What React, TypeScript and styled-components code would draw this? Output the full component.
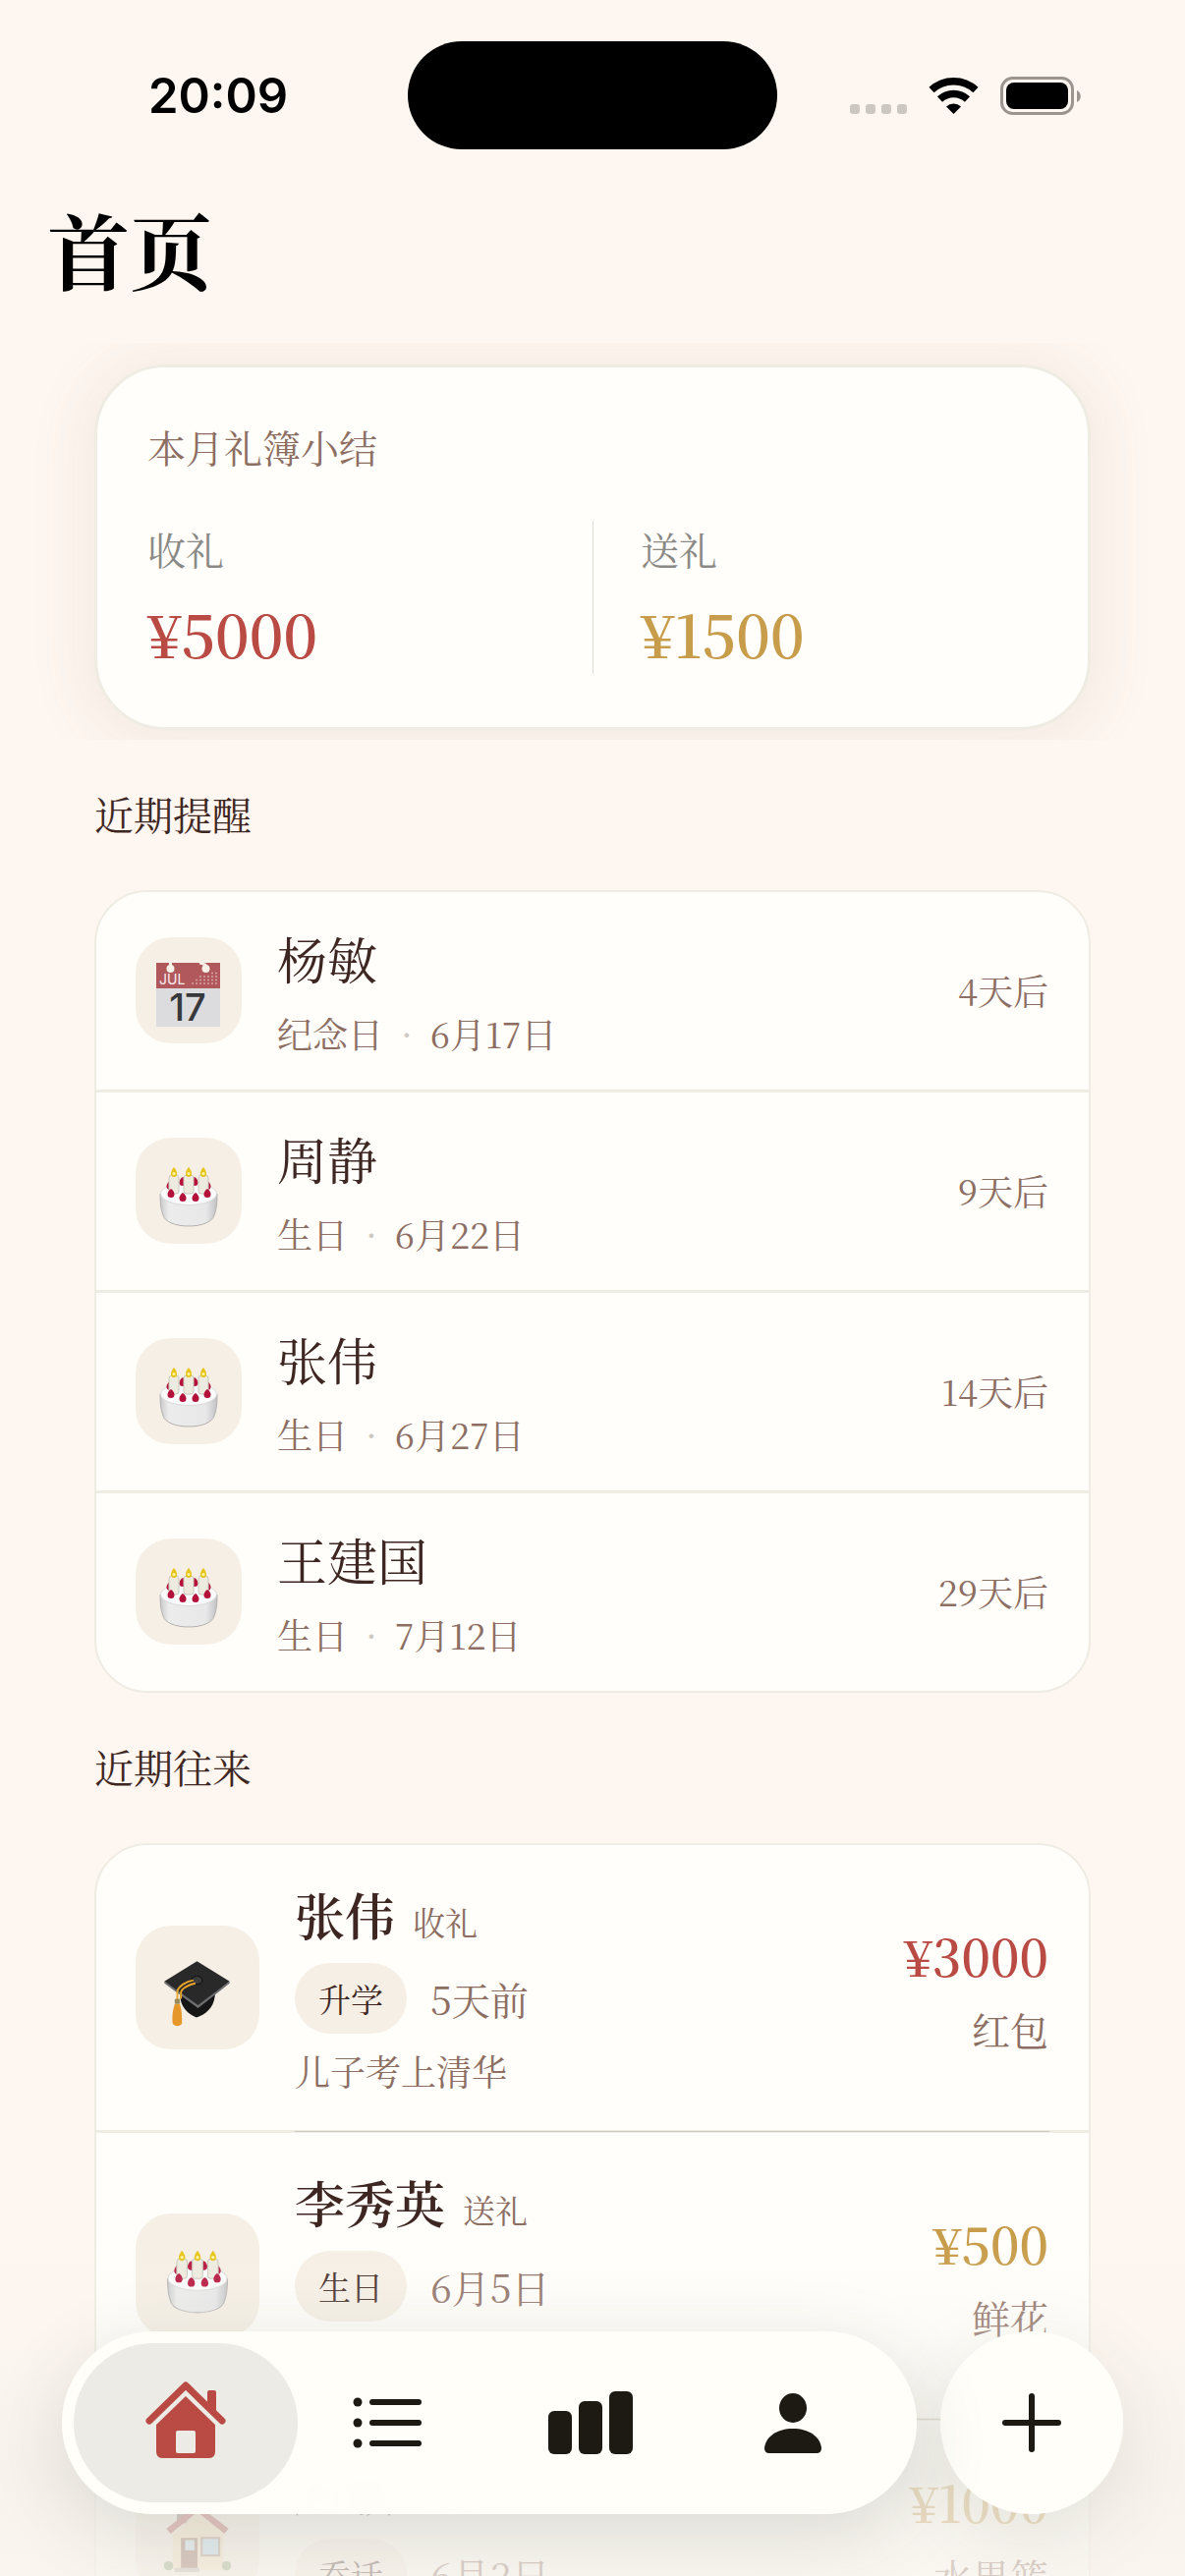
import React from "react";
import styled, { createGlobalStyle } from "styled-components";

const color = {
  paper: "#fef6f0",
  card: "#fffefa",
  line: "#efece3",
  tile: "#f5efe5",
  ink: "#3e2723",
  brown: "#8d6e63",
  grey: "#8a8985",
  red: "#b94b44",
  gold: "#c79c4a",
};

const serif = `"Noto Serif CJK SC", "Liberation Serif", "Noto Sans CJK SC", serif`;

const GlobalStyle = createGlobalStyle`
  * { box-sizing: border-box; }
  body { margin: 0; background: ${color.paper}; }
  h1, h2, h3, p, ul, dl, dd, dt { margin: 0; padding: 0; font-weight: 400; }
  ul { list-style: none; }
`;

const Screen = styled.div`
  position: relative;
  display: flex;
  flex-direction: column;
  height: 100vh;
  overflow: hidden;
  background: ${color.paper};
  color: ${color.ink};
  font-family: ${serif};
`;

const StatusBar = styled.header`
  display: grid;
  grid-template-columns: 1fr 376px 1fr;
  align-items: center;
  padding: 42px 0 0;
`;

const Clock = styled.time`
  padding: 2px 0 0 151px;
  font: 600 49px/60px Inter, "Liberation Sans", sans-serif;
  color: #000;
`;

const Island = styled.div`
  height: 110px;
  border-radius: 55px;
  background: #000;
`;

const StatusIcons = styled.svg`
  display: block;
  justify-self: end;
  margin-right: 105px;
  width: 236px;
  height: 42px;
`;

const Scroll = styled.main`
  flex: 1;
  min-height: 0;
  overflow: hidden;
`;

const Title = styled.h1`
  padding: 41px 48px 0;
  font-size: 84px;
  line-height: 120px;
  font-weight: 700;
  color: #000;
`;

const SummaryBand = styled.section`
  margin-top: 36px;
  padding: 22px 96px 10px;
  overflow: hidden;
`;

const SummaryCard = styled.div`
  padding: 53px 51px 54px;
  border: 3px solid ${color.line};
  border-radius: 72px;
  background: ${color.card};
  box-shadow: 0 6px 54px 20px rgba(100, 110, 70, 0.06);
`;

const SummaryTitle = styled.h2`
  font-size: 39px;
  line-height: 54px;
  color: ${color.brown};
`;

const Totals = styled.dl`
  display: grid;
  grid-template-columns: 1fr 1fr;
  margin-top: 49px;
`;

const Total = styled.div`
  height: 156px;
  & + & {
    padding-left: 48px;
    border-left: 1px solid #dfdcd4;
  }
`;

const TotalLabel = styled.dt`
  font-size: 39px;
  line-height: 57px;
  color: ${color.grey};
`;

const TotalValue = styled.dd<{ $tone: string }>`
  padding-top: 15px;
  font-size: 60px;
  line-height: 84px;
  font-weight: 600;
  font-variant-numeric: tabular-nums;
  color: ${(p) => p.$tone};
`;

const SectionTitle = styled.h2`
  padding: 0 96px;
  font-size: 40px;
  line-height: 60px;
`;

const Section = styled.section`
  padding-top: 45px;
`;

const List = styled.ul`
  margin: 48px 96px 0;
  border: 2px solid ${color.line};
  border-radius: 54px;
  background: ${color.card};
  overflow: hidden;
`;

const Row = styled.li`
  position: relative;
  display: flex;
  align-items: center;
  gap: 36px;
  padding: 30px 41px 30px 40px;
  & + & { border-top: 3px solid ${color.line}; }
`;

const ReminderRow = styled(Row)`
  padding-top: 31px;
  padding-bottom: 32px;
`;

const RecordRow = styled(Row)`
  & + &::before {
    content: "";
    position: absolute;
    top: -2px;
    left: 202px;
    right: 40px;
    height: 1px;
    background: #cdc9bc;
  }
`;

const Tile = styled.span<{ $large?: boolean }>`
  flex: none;
  display: grid;
  place-items: center;
  width: ${(p) => (p.$large ? 126 : 108)}px;
  height: ${(p) => (p.$large ? 126 : 108)}px;
  border-radius: 36px;
  background: ${color.tile};
  svg {
    display: block;
    width: ${(p) => (p.$large ? 70 : 66)}px;
    height: ${(p) => (p.$large ? 80 : 76)}px;
  }
`;

const RowText = styled.div`
  flex: 1;
  min-width: 0;
`;

const RecordText = styled(RowText)`
  padding-top: 4px;
`;

const Name = styled.h3<{ $strong?: boolean }>`
  font-size: 51px;
  line-height: 72px;
  font-weight: ${(p) => (p.$strong ? 600 : 400)};
`;

const Meta = styled.p`
  display: flex;
  gap: 18px;
  margin-top: 15px;
  font-size: 36px;
  line-height: 51px;
  color: ${color.brown};
`;

const Dot = styled.span`
  color: #cfc8c2;
`;

const When = styled.span<{ $large?: boolean }>`
  font-size: ${(p) => (p.$large ? 39 : 36)}px;
  line-height: 48px;
  color: ${color.brown};
`;

const NameLine = styled.div`
  display: flex;
  align-items: baseline;
  gap: 18px;
`;

const Direction = styled.span`
  font-size: 33px;
  color: ${color.brown};
`;

const TagLine = styled.div`
  display: flex;
  align-items: center;
  gap: 24px;
  margin: 14px 0 8px;
`;

const Tag = styled.span`
  padding: 0 24px;
  border-radius: 36px;
  background: ${color.tile};
  font-size: 33px;
  line-height: 72px;
`;

const Note = styled.p`
  font-size: 36px;
  line-height: 60px;
  color: ${color.brown};
`;

const Money = styled.div`
  padding-top: 3px;
  text-align: right;
`;

const Amount = styled.p<{ $tone: string }>`
  font-size: 51px;
  line-height: 72px;
  font-weight: 600;
  font-variant-numeric: tabular-nums;
  color: ${(p) => p.$tone};
`;

const Kind = styled.p`
  margin-top: 9px;
  font-size: 39px;
  line-height: 60px;
  color: ${color.brown};
`;

const Dock = styled.div`
  position: absolute;
  inset: auto 0 0;
  display: flex;
  gap: 24px;
  padding: 93px 63px 63px;
  background: linear-gradient(
    rgba(252, 248, 243, 0) 0,
    rgba(249, 246, 241, 0.25) 90px,
    rgba(245, 242, 236, 0.75) 240px,
    rgba(248, 244, 238, 0.72) 100%
  );
`;

const Tabs = styled.nav`
  flex: 1;
  display: flex;
  padding: 12px;
  border-radius: 93px;
  background: rgba(255, 254, 249, 0.97);
  backdrop-filter: blur(12px);
  box-shadow: 0 20px 80px rgba(50, 60, 40, 0.14);
`;

const Tab = styled.button<{ $active?: boolean }>`
  flex: 1;
  display: grid;
  place-items: center;
  height: 162px;
  padding: 0;
  border: 0;
  border-radius: 81px;
  background: ${(p) => (p.$active ? "#ecebe6" : "transparent")};
  color: ${(p) => (p.$active ? color.red : "#1d1a14")};
  & + & { margin-left: -22px; }
  svg { display: block; width: 96px; height: 96px; }
`;

const AddButton = styled.button`
  display: grid;
  place-items: center;
  width: 186px;
  height: 186px;
  padding: 0;
  border: 0;
  border-radius: 50%;
  background: rgba(255, 254, 249, 0.99);
  color: #1d1a14;
  box-shadow: 0 20px 80px rgba(50, 60, 40, 0.1);
  svg { display: block; width: 96px; height: 96px; }
`;

const CalendarIcon = () => (
  <svg viewBox="0 0 66 76" aria-hidden="true">
    <rect x="0" y="10" width="65" height="65" fill="#dcdcde" />
    <rect x="0" y="10" width="65" height="26" fill="#b0585c" />
    <circle cx="14.500" cy="16" r="4" fill="#f7f1e8" />
    <rect x="13" y="9" width="3" height="7" fill="#f7f1e8" />
    <circle cx="50.500" cy="16" r="4" fill="#f7f1e8" />
    <path d="M44 10l6 2v4" stroke="#f7f1e8" strokeWidth="2.500" fill="none" />
    <path d="M36 31h26M40 27.500h22M44 24h18M56 20.500h6" stroke="#d9a2a2" strokeWidth="1.500" strokeDasharray="2 2" />
    <text x="3" y="32" fontFamily="Inter, sans-serif" fontSize="14" fill="#fbeeee">JUL</text>
    <text x="32" y="69" textAnchor="middle" fontFamily="Inter, sans-serif" fontWeight="500" fontSize="38" fill="#37383b">17</text>
  </svg>
);

const Berry = ({ x, y }: { x: number; y: number }) => (
  <path d={`M${x} ${y - 5}c2 1 3.500 3.500 3.500 5.500a3.500 3.500 0 0 1-7 0c0-2 1.500-4.500 3.500-5.500z`} fill="#b3113a" />
);

const CakeIcon = () => (
  <svg viewBox="0 0 66 76" aria-hidden="true">
    <defs>
      <linearGradient id="cakeSide" x1="0" y1="0" x2="1" y2="0">
        <stop offset="0" stopColor="#c9c9cb" />
        <stop offset="0.15" stopColor="#ececec" />
        <stop offset="0.8" stopColor="#e8e8e9" />
        <stop offset="1" stopColor="#c2c2c5" />
      </linearGradient>
    </defs>
    <path d="M4 41c0 10 1 17 3 22 2 7 13 11 26 11s24-4 26-11c2-5 3-12 3-22z" fill="url(#cakeSide)" stroke="#b3b1b0" strokeWidth="1" />
    <ellipse cx="33" cy="41" rx="28.500" ry="11.500" fill="#fbfbfb" stroke="#dadada" strokeWidth="1" />
    <Berry x={27} y={29} />
    <Berry x={39} y={29} />
    <Berry x={14} y={33} />
    <Berry x={52} y={33} />
    {[18, 33, 48].map((x) => (
      <g key={x}>
        <rect x={x - 5} y="22" width="10" height="19" rx="3" fill="#edeadf" stroke="#cbc8bb" strokeWidth="1" />
        <path d={`M${x} 14c3 4 3 5 3 7a3 3 0 0 1-6 0c0-2 0-3 3-7z`} fill="#e6c419" />
        <circle cx={x} cy="20.500" r="1.500" fill="#fff6a8" />
      </g>
    ))}
    <Berry x={15} y={41} />
    <Berry x={27} y={45} />
    <Berry x={40} y={45} />
    <Berry x={52} y={41} />
  </svg>
);

const CapIcon = () => (
  <svg viewBox="0 0 66 76" aria-hidden="true">
    <path d="M16 43c0 14 7 20 16 24 9-3 18-10 18-24z" fill="#161617" />
    <path d="M32.500 12.500L64 32 33.500 57 1 32z" fill="#29292a" />
    <path d="M1 32l32.500 23L64 32v2L33.500 58 1 34z" fill="#6d6e70" />
    <ellipse cx="32.500" cy="31" rx="5" ry="4" fill="#3b3c3e" stroke="#121212" strokeWidth="1" />
    <path d="M29 31c-7 1-15 6-15.500 11v8M31 34c-6 1-14 5-14 9v6" stroke="#eaa52b" strokeWidth="1.800" fill="none" />
    <path d="M11 54c-2 6-3 13-2 19 2 3 7 3 9 0 0-6 0-13-2-19z" fill="#e5972a" />
    <rect x="11" y="49" width="5" height="5" rx="1" fill="#9a8a5a" />
  </svg>
);

const HouseIcon = () => (
  <svg viewBox="0 0 66 76" aria-hidden="true">
    <rect x="13" y="14" width="10" height="14" fill="#8a6a66" />
    <path d="M33 18L9 38v35h49V38z" fill="#f3dfb8" />
    <path d="M33 10L3 33l4 5 26-21 26 21 4-5z" fill="#b04a48" />
    <rect x="17" y="42" width="16" height="31" fill="#8a5a48" />
    <rect x="21" y="44" width="9" height="10" fill="#b9d6ea" />
    <rect x="37" y="42" width="17" height="17" fill="#a9d3ee" stroke="#9a7f68" strokeWidth="2" />
    <circle cx="5" cy="69" r="4.500" fill="#7fa36a" />
    <circle cx="61" cy="69" r="4.500" fill="#7fa36a" />
    <rect x="11" y="71" width="24" height="4" fill="#b9b3a8" />
  </svg>
);

const icons = { calendar: CalendarIcon, cake: CakeIcon, cap: CapIcon, house: HouseIcon };
type IconName = keyof typeof icons;

const reminders: { icon: IconName; name: string; kind: string; date: string; when: string }[] = [
  { icon: "calendar", name: "杨敏", kind: "纪念日", date: "6月17日", when: "4天后" },
  { icon: "cake", name: "周静", kind: "生日", date: "6月22日", when: "9天后" },
  { icon: "cake", name: "张伟", kind: "生日", date: "6月27日", when: "14天后" },
  { icon: "cake", name: "王建国", kind: "生日", date: "7月12日", when: "29天后" },
];

interface GiftRecord {
  icon: IconName;
  name: string;
  direction: "收礼" | "送礼";
  tag: string;
  date: string;
  note?: string;
  amount: string;
  gift: string;
}

const records: GiftRecord[] = [
  { icon: "cap", name: "张伟", direction: "收礼", tag: "升学", date: "5天前", note: "儿子考上清华", amount: "¥3000", gift: "红包" },
  { icon: "cake", name: "李秀英", direction: "送礼", tag: "生日", date: "6月5日", note: "生日快乐", amount: "¥500", gift: "鲜花" },
  { icon: "house", name: "赵敏", direction: "送礼", tag: "乔迁", date: "6月2日", amount: "¥1000", gift: "水果篮" },
];

export default function App() {
  return (
    <Screen lang="zh-CN">
      <GlobalStyle />
      <StatusBar>
        <Clock>20:09</Clock>
        <Island />
        <StatusIcons viewBox="0 0 236 42" aria-hidden="true">
          {[0, 16, 32, 48].map((x) => (
            <rect key={x} x={x} y="30" width="10" height="10" rx="3" fill="#cdc7c1" />
          ))}
          <g fill="none" stroke="#000">
            <path d="M83 15.500a33 33 0 0 1 45 0" strokeWidth="7.500" />
            <path d="M91.500 25a20.500 20.500 0 0 1 28 0" strokeWidth="7.500" />
          </g>
          <path d="M98 32.500a11 11 0 0 1 15 0l-7.500 7.500z" fill="#000" />
          <rect x="154.500" y="3.500" width="72" height="36" rx="11" fill="none" stroke="#9a958f" strokeWidth="3" />
          <rect x="159" y="8" width="63" height="27" rx="8" fill="#000" />
          <path d="M231 16c5 2 5 10 0 12z" fill="#9a958f" />
        </StatusIcons>
      </StatusBar>

      <Scroll>
        <Title>首页</Title>
        <SummaryBand>
          <SummaryCard>
            <SummaryTitle>本月礼簿小结</SummaryTitle>
            <Totals>
              <Total>
                <TotalLabel>收礼</TotalLabel>
                <TotalValue $tone={color.red}>¥5000</TotalValue>
              </Total>
              <Total>
                <TotalLabel>送礼</TotalLabel>
                <TotalValue $tone={color.gold}>¥1500</TotalValue>
              </Total>
            </Totals>
          </SummaryCard>
        </SummaryBand>

        <Section>
          <SectionTitle>近期提醒</SectionTitle>
          <List>
            {reminders.map((r) => {
              const Icon = icons[r.icon];
              return (
                <ReminderRow key={r.name}>
                  <Tile><Icon /></Tile>
                  <RowText>
                    <Name>{r.name}</Name>
                    <Meta>
                      <span>{r.kind}</span>
                      <Dot>·</Dot>
                      <span>{r.date}</span>
                    </Meta>
                  </RowText>
                  <When>{r.when}</When>
                </ReminderRow>
              );
            })}
          </List>
        </Section>

        <Section>
          <SectionTitle>近期往来</SectionTitle>
          <List>
            {records.map((r) => {
              const Icon = icons[r.icon];
              return (
                <RecordRow key={r.name}>
                  <Tile $large><Icon /></Tile>
                  <RecordText>
                    <NameLine>
                      <Name $strong>{r.name}</Name>
                      <Direction>{r.direction}</Direction>
                    </NameLine>
                    <TagLine>
                      <Tag>{r.tag}</Tag>
                      <When $large>{r.date}</When>
                    </TagLine>
                    {r.note && <Note>{r.note}</Note>}
                  </RecordText>
                  <Money>
                    <Amount $tone={r.direction === "收礼" ? color.red : color.gold}>{r.amount}</Amount>
                    <Kind>{r.gift}</Kind>
                  </Money>
                </RecordRow>
              );
            })}
          </List>
        </Section>
      </Scroll>

      <Dock>
        <Tabs aria-label="主导航">
          <Tab type="button" $active aria-label="首页" aria-current="page">
            <svg viewBox="0 0 96 96" fill="currentColor" aria-hidden="true">
              <path d="M11 46L48 10l37 36" fill="none" stroke="currentColor" strokeWidth="7" strokeLinecap="round" strokeLinejoin="round" />
              <path d="M70 17q0-2 2-2h5q2 0 2 2v20l-9-9z" />
              <path fillRule="evenodd" d="M48 21l30 29v27q0 7-6 7H24q-6 0-6-7V50zM40 56q-2 0-2 2v19q0 2 2 2h16q2 0 2-2V58q0-2-2-2z" />
            </svg>
          </Tab>
          <Tab type="button" aria-label="列表">
            <svg viewBox="0 0 96 96" fill="currentColor" aria-hidden="true">
              {[27, 48, 69].map((y) => (
                <g key={y}>
                  <circle cx="17" cy={y} r="4.500" />
                  <rect x="29" y={y - 3} width="53" height="6" rx="3" />
                </g>
              ))}
            </svg>
          </Tab>
          <Tab type="button" aria-label="统计">
            <svg viewBox="0 0 96 96" fill="currentColor" aria-hidden="true">
              <rect x="5" y="36" width="24" height="44" rx="6" />
              <rect x="36" y="26" width="24" height="54" rx="6" />
              <rect x="67" y="16" width="24" height="64" rx="6" />
            </svg>
          </Tab>
          <Tab type="button" aria-label="我的">
            <svg viewBox="0 0 96 96" fill="currentColor" aria-hidden="true">
              <ellipse cx="48" cy="33" rx="14" ry="15" />
              <path d="M24 79q-5 0-5-5c1-12 13-20 29-20s28 8 29 20q0 5-5 5z" />
            </svg>
          </Tab>
        </Tabs>
        <AddButton type="button" aria-label="添加">
          <svg viewBox="0 0 96 96" aria-hidden="true">
            <path d="M48 21v54M21 48h54" stroke="currentColor" strokeWidth="6" strokeLinecap="round" />
          </svg>
        </AddButton>
      </Dock>
    </Screen>
  );
}
